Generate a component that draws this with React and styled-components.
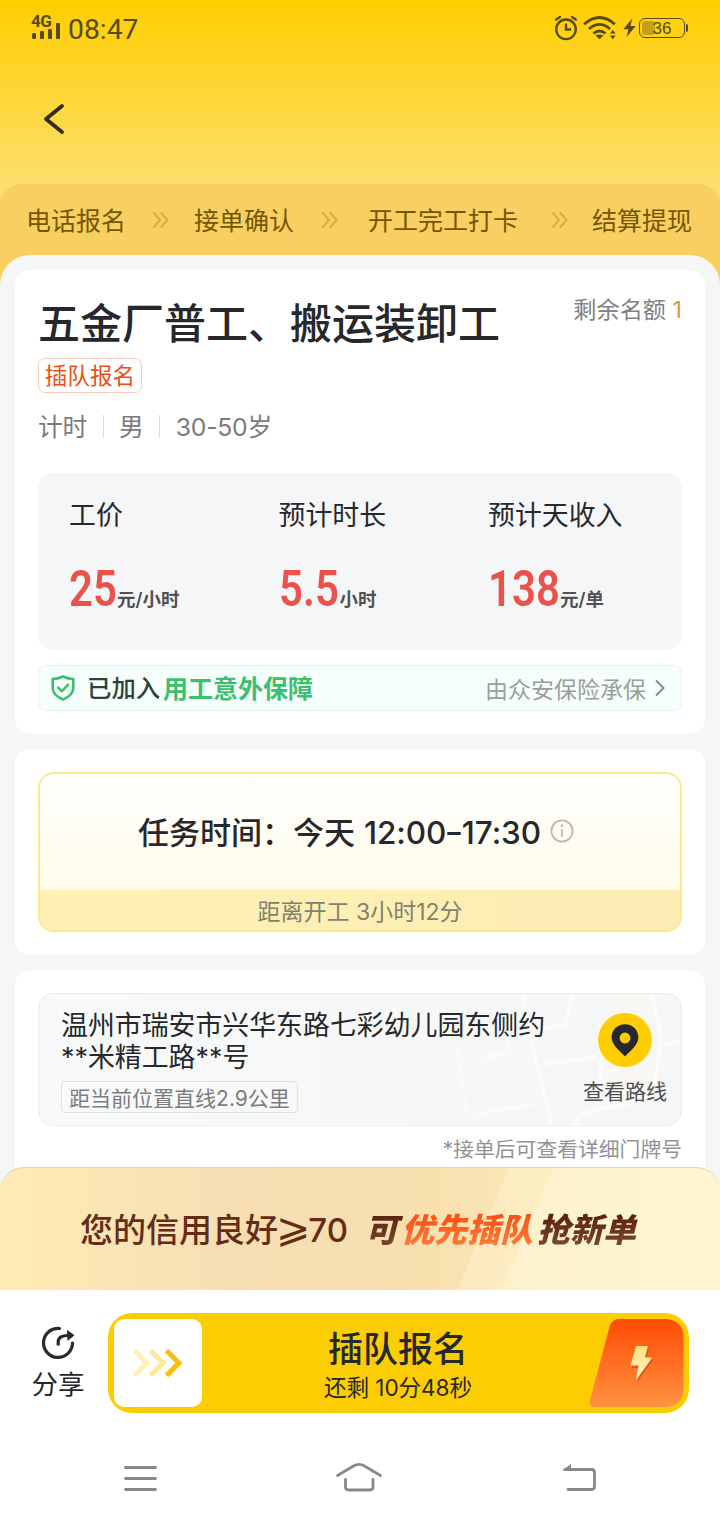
import React from 'react'
import styled, { createGlobalStyle } from 'styled-components'

const steps = [
    { label: '电话报名', before: 26, after: 25 },
    { label: '接单确认', before: 27, after: 30 },
    { label: '开工完工打卡', before: 33, after: 24 },
    { label: '结算提现' },
]

const stats = [
    { label: '工价', value: '25', unit: '元/小时', width: 48 },
    { label: '预计时长', value: '5.5', unit: '小时', width: 61 },
    { label: '预计天收入', value: '138', unit: '元/单', width: 72 },
]

const StatusBar = () => (
    <StatusBarStyled>
        <Signal>
            <span>4G</span>
            <svg width="30" height="17" viewBox="0 0 30 17" fill="#574a1c">
                <rect x="1" y="11" width="4" height="6" rx="1.2" />
                <rect x="9" y="9" width="4" height="8" rx="1.2" />
                <rect x="17" y="7" width="4" height="10" rx="1.2" />
                <rect x="25" y="1" width="4" height="16" rx="1.2" />
            </svg>
        </Signal>
        <Clock>08:47</Clock>
        <StatusIcons>
            <svg width="24" height="26" viewBox="0 0 24 26" fill="none" stroke="#574a1c" strokeWidth="2.4" strokeLinecap="round">
                <circle cx="12" cy="14.3" r="9.8" />
                <path d="M12 8.5v6h5.2" strokeLinecap="butt" />
                <path d="M2.2 4.5L6 1.9M21.8 4.5L18 1.9" />
            </svg>
            <svg width="34" height="26" viewBox="0 0 34 26" fill="none" stroke="#574a1c" strokeWidth="2.8">
                <path d="M1.2 9.2Q16.5 -4.2 31.8 9.2" />
                <path d="M6 14Q16.5 4.8 27 14" />
                <path d="M10.5 18.5Q16.5 13.6 22.5 18.5" />
                <path d="M12.5 20.6Q16.5 18.4 20.5 20.6L16.5 24.2Z" fill="#574a1c" stroke="none" />
                <path d="M27 18.6L29.8 15L32.6 18.6ZM27 20.6L29.8 24.2L32.6 20.6Z" fill="#574a1c" stroke="none" />
            </svg>
            <svg width="13" height="20" viewBox="0 0 13 20" fill="#574a1c">
                <path d="M9.2 0.5L0.3 11.2H5.4L3.6 19L12.7 8H7.4Z" />
            </svg>
            <Battery><i />36</Battery>
        </StatusIcons>
    </StatusBarStyled>
)

const Header = () => (
    <HeaderStyled>
        <svg width="24" height="34" viewBox="0 0 24 34" fill="none" stroke="#362d22" strokeWidth="3.8" strokeLinecap="round" strokeLinejoin="round">
            <path d="M20 4L4 17L20 30" />
        </svg>
    </HeaderStyled>
)

const Steps = () => (
    <StepsStyled>
        {steps.map(step => (
            <React.Fragment key={step.label}>
                <span>{step.label}</span>
                {step.after && (
                    <StepArrow $before={step.before} $after={step.after} width="17" height="18" viewBox="0 0 17 18">
                        <path d="M1.5 1.5L8 9L1.5 16.5M9 1.5L15.5 9L9 16.5" />
                    </StepArrow>
                )}
            </React.Fragment>
        ))}
    </StepsStyled>
)

const JobCard = () => (
    <Card $height={464}>
        <TitleRow>
            <h1>五金厂普工、搬运装卸工</h1>
            <Quota>剩余名额 <b>1</b></Quota>
        </TitleRow>
        <Tag>插队报名</Tag>
        <Facts>
            <span>计时</span>
            <span>男</span>
            <span>30-50岁</span>
        </Facts>
        <Stats>
            {stats.map(stat => (
                <Stat key={stat.label}>
                    <div className="label">{stat.label}</div>
                    <Price $width={stat.width}>
                        <b>{stat.value}</b>
                        <small>{stat.unit}</small>
                    </Price>
                </Stat>
            ))}
        </Stats>
        <Insurance>
            <svg width="24" height="26" viewBox="0 0 24 26" fill="none" stroke="#3cc070" strokeWidth="2.6" strokeLinecap="round" strokeLinejoin="round">
                <path d="M12 1.5Q17 4 22.3 4V13Q22 20.5 12 24.5Q2 20.5 1.7 13V4Q7 4 12 1.5Z" />
                <path d="M7.2 12.6L11 16.2L17 9.8" />
            </svg>
            <strong>已加入</strong>
            <em>用工意外保障</em>
            <span>由众安保险承保</span>
            <svg width="10" height="18" viewBox="0 0 10 18" fill="none" stroke="#7f8683" strokeWidth="1.8">
                <path d="M1 1.5L8.6 9L1 16.5" />
            </svg>
        </Insurance>
    </Card>
)

const TimeCard = () => (
    <Card $height={206}>
        <TimeBox>
            <TimeRange>
                <span>任务时间：今天</span>
                <b>12:00<i>–</i>17:30</b>
                <svg width="24" height="24" viewBox="0 0 24 24" fill="none" stroke="#bcbab6" strokeWidth="1.8">
                    <circle cx="12" cy="12" r="10.6" />
                    <path d="M12 10.2v7.6" />
                    <circle cx="12" cy="6.7" r="1.3" fill="#bcbab6" stroke="none" />
                </svg>
            </TimeRange>
            <Countdown>距离开工 3小时12分</Countdown>
        </TimeBox>
    </Card>
)

const AddressCard = () => (
    <Card $height={230}>
        <AddressBox>
            <MapLines viewBox="0 0 300 132" fill="none">
                <path d="M221 0H272V110H221Z" fill="#faf8f1" opacity=".8" />
                <path d="M142 0Q146 36 152 54L171 132M191 0L185 30L156 37M164 70L216 63M279 52L300 46M76 54L86 120M102 65L126 57L131 36M89 122L152 110M193 132L199 120L252 108M219 30V90M271 0Q277 20 279 44L274 90" stroke="#fff" strokeWidth="4" strokeLinejoin="round" opacity=".6" />
            </MapLines>
            <Address>
                <p>温州市瑞安市兴华东路七彩幼儿园东侧约<br />**米精工路**号</p>
                <Distance>距当前位置直线2.9公里</Distance>
            </Address>
            <Route>
                <svg width="54" height="54" viewBox="0 0 54 54">
                    <circle cx="27" cy="27" r="27" fill="#ffcd03" />
                    <path fillRule="evenodd" d="M27 11.2C19.3 11.2 13.6 17 13.6 24.3C13.6 31 19.6 36.2 27 43.6C34.4 36.2 40.4 31 40.4 24.3C40.4 17 34.7 11.2 27 11.2ZM27 19.6A5.4 5.4 0 1 1 27 30.4A5.4 5.4 0 1 1 27 19.6Z" fill="#27282b" />
                </svg>
                <span>查看路线</span>
            </Route>
        </AddressBox>
        <Hint>*接单后可查看详细门牌号</Hint>
    </Card>
)

const CreditBanner = () => (
    <CreditBannerStyled>
        <Credit>您的信用良好<i>⩾</i>70</Credit>
        <Slant $from="#5c2114" $to="#7a4a2c" $width={36}>可</Slant>
        <Slant $from="#fa5316" $to="#ff7a3a" $width={136}>优先插队</Slant>
        <Slant $from="#5c2114" $to="#7a4a2c" $width={104}>抢新单</Slant>
    </CreditBannerStyled>
)

const ActionBar = () => (
    <ActionBarStyled>
        <Share>
            <svg width="34" height="34" viewBox="0 0 34 34" fill="none" stroke="#2a2a2c" strokeWidth="3.2">
                <path d="M18.5 2.5A14.5 14.5 0 1 0 31.5 17" strokeLinecap="round" />
                <path d="M17.2 19.5V16Q17.2 9.5 27 9.5" />
                <path d="M26 3.8L33.5 9.2L26.5 15Z" fill="#2a2a2c" stroke="none" />
            </svg>
            <span>分享</span>
        </Share>
        <ApplyButton>
            <Knob>
                <svg width="50" height="30" viewBox="0 0 50 30" fill="none" strokeWidth="5">
                    <path d="M2.5 2.5L15 15L2.5 27.5" stroke="#ffefb8" />
                    <path d="M18.5 2.5L31 15L18.5 27.5" stroke="#ffe799" />
                    <path d="M34.5 2.5L47 15L34.5 27.5" stroke="#fdbf09" />
                </svg>
            </Knob>
            <ApplyText>
                <strong>插队报名</strong>
                <span>还剩 10分48秒</span>
            </ApplyText>
            <svg width="96" height="88" viewBox="0 0 96 88">
                <defs>
                    <linearGradient id="tile" x1="0" y1="0" x2="0" y2="1">
                        <stop offset="0" stopColor="#ff4a03" />
                        <stop offset="1" stopColor="#ff9342" />
                    </linearGradient>
                    <linearGradient id="bolt" x1="0" y1="0" x2="0" y2="1">
                        <stop offset="0" stopColor="#ffe27e" />
                        <stop offset="1" stopColor="#fff0c4" />
                    </linearGradient>
                </defs>
                <path d="M30 0H75Q94.500 0 94.500 19.500V68.500Q94.500 88 75 88H5Q-0.500 88 0.800 82L20.500 8Q22.800 0 30 0Z" fill="url(#tile)" />
                <path d="M48 29H60L57 40.500H64.500L48.500 62.500L50.500 49H43Z" fill="#b04419" opacity=".5" />
                <path d="M47 27H59L56 38.500H63.500L47 61L49.500 46.500H41.500Z" fill="url(#bolt)" />
            </svg>
        </ApplyButton>
    </ActionBarStyled>
)

const SystemNav = () => (
    <SystemNavStyled>
        <svg width="34" height="28" viewBox="0 0 34 28">
            <path d="M2.500 3.500H32.500M2.500 14.500H32.500M2.500 25.500H32.500" />
        </svg>
        <svg width="48" height="32" viewBox="0 0 48 32">
            <path d="M2.500 14.500L19 4.800Q24 2 29 4.800L45.500 14.500M10.500 18.500V26Q10.500 29 13.500 29H35Q38 29 38 26V18.500" />
        </svg>
        <svg width="36" height="28" viewBox="0 0 36 28">
            <path d="M4 5.500H30.500Q33.500 5.500 33.500 8.500V22.500Q33.500 25.500 30.500 25.500H7" />
            <path d="M1 6.500L10 0V6.500Z" fill="#88888a" stroke="none" />
        </svg>
    </SystemNavStyled>
)

const App = () => (
    <Screen>
        <GlobalStyle />
        <StatusBar />
        <Header />
        <Steps />
        <Content>
            <JobCard />
            <TimeCard />
            <AddressCard />
        </Content>
        <CreditBanner />
        <ActionBar />
        <SystemNav />
    </Screen>
)

export default App

const GlobalStyle = createGlobalStyle`
    * {
        box-sizing: border-box;
    }

    body {
        margin: 0;
        font-family: Inter, "Noto Sans CJK SC", sans-serif;
        color: #27282b;
    }

    h1, p {
        margin: 0;
    }

    em, i {
        font-style: normal;
    }

    svg {
        display: block;
        flex: none;
    }
`;

const Screen = styled.div`
    display: flex;
    flex-direction: column;
    width: 720px;
    height: 1520px;
    overflow: hidden;
    white-space: nowrap;
    background: linear-gradient(#ffce00 0, #fcdf6c 184px, #fce078 260px, #fff 400px);
`;

const StatusBarStyled = styled.div`
    display: flex;
    height: 56px;
    padding: 0 32px 0 31px;
    color: #574a1c;
`;

const Signal = styled.div`
    width: 30px;
    padding-top: 14px;

    span {
        display: block;
        font-family: Roboto, sans-serif;
        font-size: 17px;
        font-weight: 700;
        line-height: 15px;
        height: 8px;
        letter-spacing: -0.5px;
    }
`;

const Clock = styled.div`
    margin-left: 7px;
    font-family: Roboto, sans-serif;
    font-size: 28.3px;
    line-height: 60px;
`;

const StatusIcons = styled.div`
    display: flex;
    margin-left: auto;
    align-items: center;

    svg:nth-child(2) {
        margin-left: 5px;
    }

    svg:nth-child(3) {
        margin-left: 6px;
    }
`;

const Battery = styled.div`
    position: relative;
    width: 46px;
    height: 20px;
    margin: 0 3px 0 3px;
    border: 1.5px solid #574a1c;
    border-radius: 6px;
    font-family: "Liberation Sans", sans-serif;
    font-size: 17px;
    line-height: 19px;
    text-align: center;

    i {
        position: absolute;
        left: 2px;
        top: 2px;
        width: 13px;
        height: 14px;
        border-radius: 3px;
        background: rgba(87, 74, 28, 0.35);
    }

    &::after {
        content: '';
        position: absolute;
        right: -4px;
        top: 5px;
        width: 2px;
        height: 8px;
        border-radius: 0 2px 2px 0;
        background: #574a1c;
    }
`;

const HeaderStyled = styled.div`
    height: 128px;
    padding: 46px 0 0 42px;
`;

const StepsStyled = styled.div`
    display: flex;
    flex: none;
    height: 102px;
    padding: 0 26px;
    border-radius: 22px 22px 0 0;
    background: #f8cf60;
    color: #745600;
    font-size: 25px;
    line-height: 74px;
`;

const StepArrow = styled.svg`
    margin: 27px ${props => props.$after}px 0 ${props => props.$before}px;
    fill: none;
    stroke: #dbae3e;
    stroke-width: 2;
`;

const Content = styled.div`
    display: flex;
    flex-direction: column;
    gap: 15px;
    flex: none;
    height: 936px;
    margin-top: -31px;
    padding: 15px;
    border-radius: 30px 30px 0 0;
    background: #f5f6f8;
    overflow: hidden;
`;

const Card = styled.div`
    flex: none;
    height: ${props => props.$height}px;
    padding: 23px;
    border-radius: 15px;
    background: #fff;
`;

const TitleRow = styled.div`
    display: flex;
    justify-content: space-between;

    h1 {
        height: 65px;
        font-size: 42px;
        font-weight: 500;
        line-height: 62px;
    }
`;

const Quota = styled.div`
    color: #808184;
    font-size: 23.2px;
    line-height: 34px;

    b {
        color: #d99a34;
        font-weight: 400;
    }
`;

const Tag = styled.div`
    width: 104px;
    height: 35px;
    border: 1px solid #f5cdbb;
    border-radius: 7px;
    color: #ea4f14;
    font-size: 22.6px;
    line-height: 33px;
    text-align: center;
`;

const Facts = styled.div`
    display: flex;
    height: 80px;
    padding-top: 17px;
    color: #7b7b7d;
    font-size: 24.8px;
    line-height: 34px;
    letter-spacing: -0.25px;

    span + span::before {
        content: '';
        display: inline-block;
        width: 1px;
        height: 23px;
        margin: 0 15.5px;
        vertical-align: -2px;
        background: #dcdcde;
    }
`;

const Stats = styled.div`
    display: grid;
    grid-template-columns: 209.5px 209.5px auto;
    height: 177px;
    padding: 22px 0 0 31px;
    border-radius: 15px;
    background: #f5f6f8;
`;

const Stat = styled.div`
    .label {
        font-size: 26.9px;
        line-height: 41px;
    }
`;

const Price = styled.div`
    display: flex;
    align-items: baseline;
    height: 60px;
    margin-top: 23px;

    b {
        width: ${props => props.$width}px;
        color: #eb524c;
        font-family: Roboto, sans-serif;
        font-size: 50px;
        font-weight: 600;
        line-height: 60px;
        transform: scaleX(0.84);
        transform-origin: left;
    }

    small {
        color: #505154;
        font-size: 18.5px;
        font-weight: 600;
    }
`;

const Insurance = styled.div`
    display: flex;
    align-items: center;
    height: 46px;
    margin-top: 15px;
    padding: 0 16px 0 12px;
    border: 1px solid #e3f5ec;
    border-radius: 8px;
    background: #f5fefa;
    font-size: 25px;

    strong, em {
        padding-bottom: 3px;
    }

    strong {
        width: 76px;
        margin-left: 12px;
        color: #2c4438;
        font-size: 24.4px;
        font-weight: 500;
    }

    em {
        color: #3cc070;
        font-weight: 700;
    }

    span {
        margin: 0 9px 0 auto;
        color: #98a09c;
        font-size: 23px;
    }
`;

const TimeBox = styled.div`
    height: 160px;
    border: 2px solid #fbe88c;
    border-radius: 16px;
    overflow: hidden;
    background: linear-gradient(#fff, #fffbe9 117px);
`;

const TimeRange = styled.div`
    display: flex;
    height: 116px;
    padding-left: 98px;
    font-size: 31px;
    font-weight: 500;
    line-height: 118px;

    b {
        width: 177px;
        margin-left: 9px;
        font-weight: 500;
        font-size: 31.5px;
        letter-spacing: -0.1px;
    }

    i {
        display: inline-block;
        transform: translateY(-1px) scaleX(0.85);
    }

    svg {
        margin: 45px 0 0 9px;
    }
`;

const Countdown = styled.div`
    height: 40px;
    background: linear-gradient(90deg, #fff0b4, #fcedb4);
    color: #85816f;
    font-size: 23px;
    line-height: 44px;
    text-align: center;
`;

const AddressBox = styled.div`
    position: relative;
    display: flex;
    justify-content: space-between;
    height: 133px;
    border: 1px solid #e9ebec;
    border-radius: 15px;
    overflow: hidden;
    background: linear-gradient(90deg, #f8f9f9, #f5f6f7);
`;

const MapLines = styled.svg`
    position: absolute;
    right: 0;
    top: 0;
    width: 300px;
    height: 132px;
    mask-image: linear-gradient(90deg, transparent, #000 60%);
`;

const Address = styled.div`
    position: relative;
    padding: 15px 0 0 22px;

    p {
        font-size: 26.9px;
        line-height: 32px;
    }
`;

const Distance = styled.div`
    width: 237px;
    height: 32px;
    margin-top: 8px;
    border: 1px solid #dfe1e2;
    border-radius: 4px;
    color: #7c7d80;
    font-size: 21px;
    line-height: 33px;
    text-align: center;
`;

const Route = styled.div`
    position: relative;
    display: flex;
    flex-direction: column;
    align-items: center;
    padding: 19px 14px 0 0;
    color: #4e4f51;
    font-size: 21px;
    line-height: 30px;

    span {
        margin-top: 10px;
    }
`;

const Hint = styled.div`
    margin-top: 8px;
    color: #929395;
    font-size: 20.8px;
    line-height: 32px;
    text-align: right;
`;

const CreditBannerStyled = styled.div`
    position: relative;
    display: flex;
    flex: none;
    height: 123px;
    margin-top: -24px;
    padding-left: 80px;
    border-top: 1px solid #ead3a2;
    border-radius: 24px 24px 0 0;
    background:
        linear-gradient(113deg, transparent 0 468px, rgba(255, 246, 214, 0.4) 469px 509px, rgba(255, 246, 214, 0.75) 510px),
        linear-gradient(90deg, #ffebb5, #f6deb3 240px, #f8dfae 420px, #fcecbb 600px, #fff2c8);
    line-height: 124px;
`;

const Credit = styled.div`
    width: 281px;
    color: #652c16;
    font-size: 33px;
    font-weight: 500;

    i {
        margin: 0 -2px;
        font-family: "DejaVu Sans", sans-serif;
        font-size: 41px;
        font-weight: 400;
        line-height: 1;
    }
`;

// padding and negative margin keep the slanted edges inside the clipped gradient
const Slant = styled.div`
    box-sizing: content-box;
    width: ${props => props.$width}px;
    margin: 0 -8px;
    padding: 0 8px 0 12px;
    margin-right: -12px;
    font-size: 33px;
    font-weight: 900;
    font-style: italic;
    color: transparent;
    background: linear-gradient(${props => props.$from} 48px, ${props => props.$to} 78px);
    background-clip: text;
    -webkit-background-clip: text;
`;

const ActionBarStyled = styled.div`
    display: flex;
    flex: none;
    height: 146px;
    padding: 23px 31px 0 31px;
    background: #fff;
`;

const Share = styled.div`
    display: flex;
    flex-direction: column;
    align-items: center;
    width: 54px;
    padding-top: 13px;
    font-size: 26.5px;
    line-height: 36px;

    span {
        margin-top: 6px;
    }
`;

const ApplyButton = styled.div`
    display: flex;
    width: 581px;
    height: 100px;
    margin-left: 23px;
    padding: 6px 4px 6px 6px;
    border-radius: 24px;
    background: #fdcd03;
`;

const Knob = styled.div`
    display: flex;
    align-items: center;
    justify-content: center;
    width: 88px;
    height: 88px;
    padding-right: 3px;
    border-radius: 10px;
    background: #fff;
`;

const ApplyText = styled.div`
    display: flex;
    flex: 1;
    flex-direction: column;
    align-items: center;
    padding-left: 5px;

    strong {
        font-size: 35px;
        font-weight: 500;
        line-height: 60px;
    }

    span {
        margin-top: -6px;
        font-size: 22.6px;
        letter-spacing: -0.1px;
        line-height: 30px;
    }
`;

const SystemNavStyled = styled.div`
    display: flex;
    flex: 1;
    justify-content: space-between;
    align-items: flex-start;
    padding: 28px 123px 0;
    background: #fff;

    svg {
        fill: none;
        stroke: #88888a;
        stroke-width: 2.8;
        stroke-linecap: round;
        stroke-linejoin: round;
    }

    svg:nth-child(2) {
        margin-top: -3px;
    }
`;
